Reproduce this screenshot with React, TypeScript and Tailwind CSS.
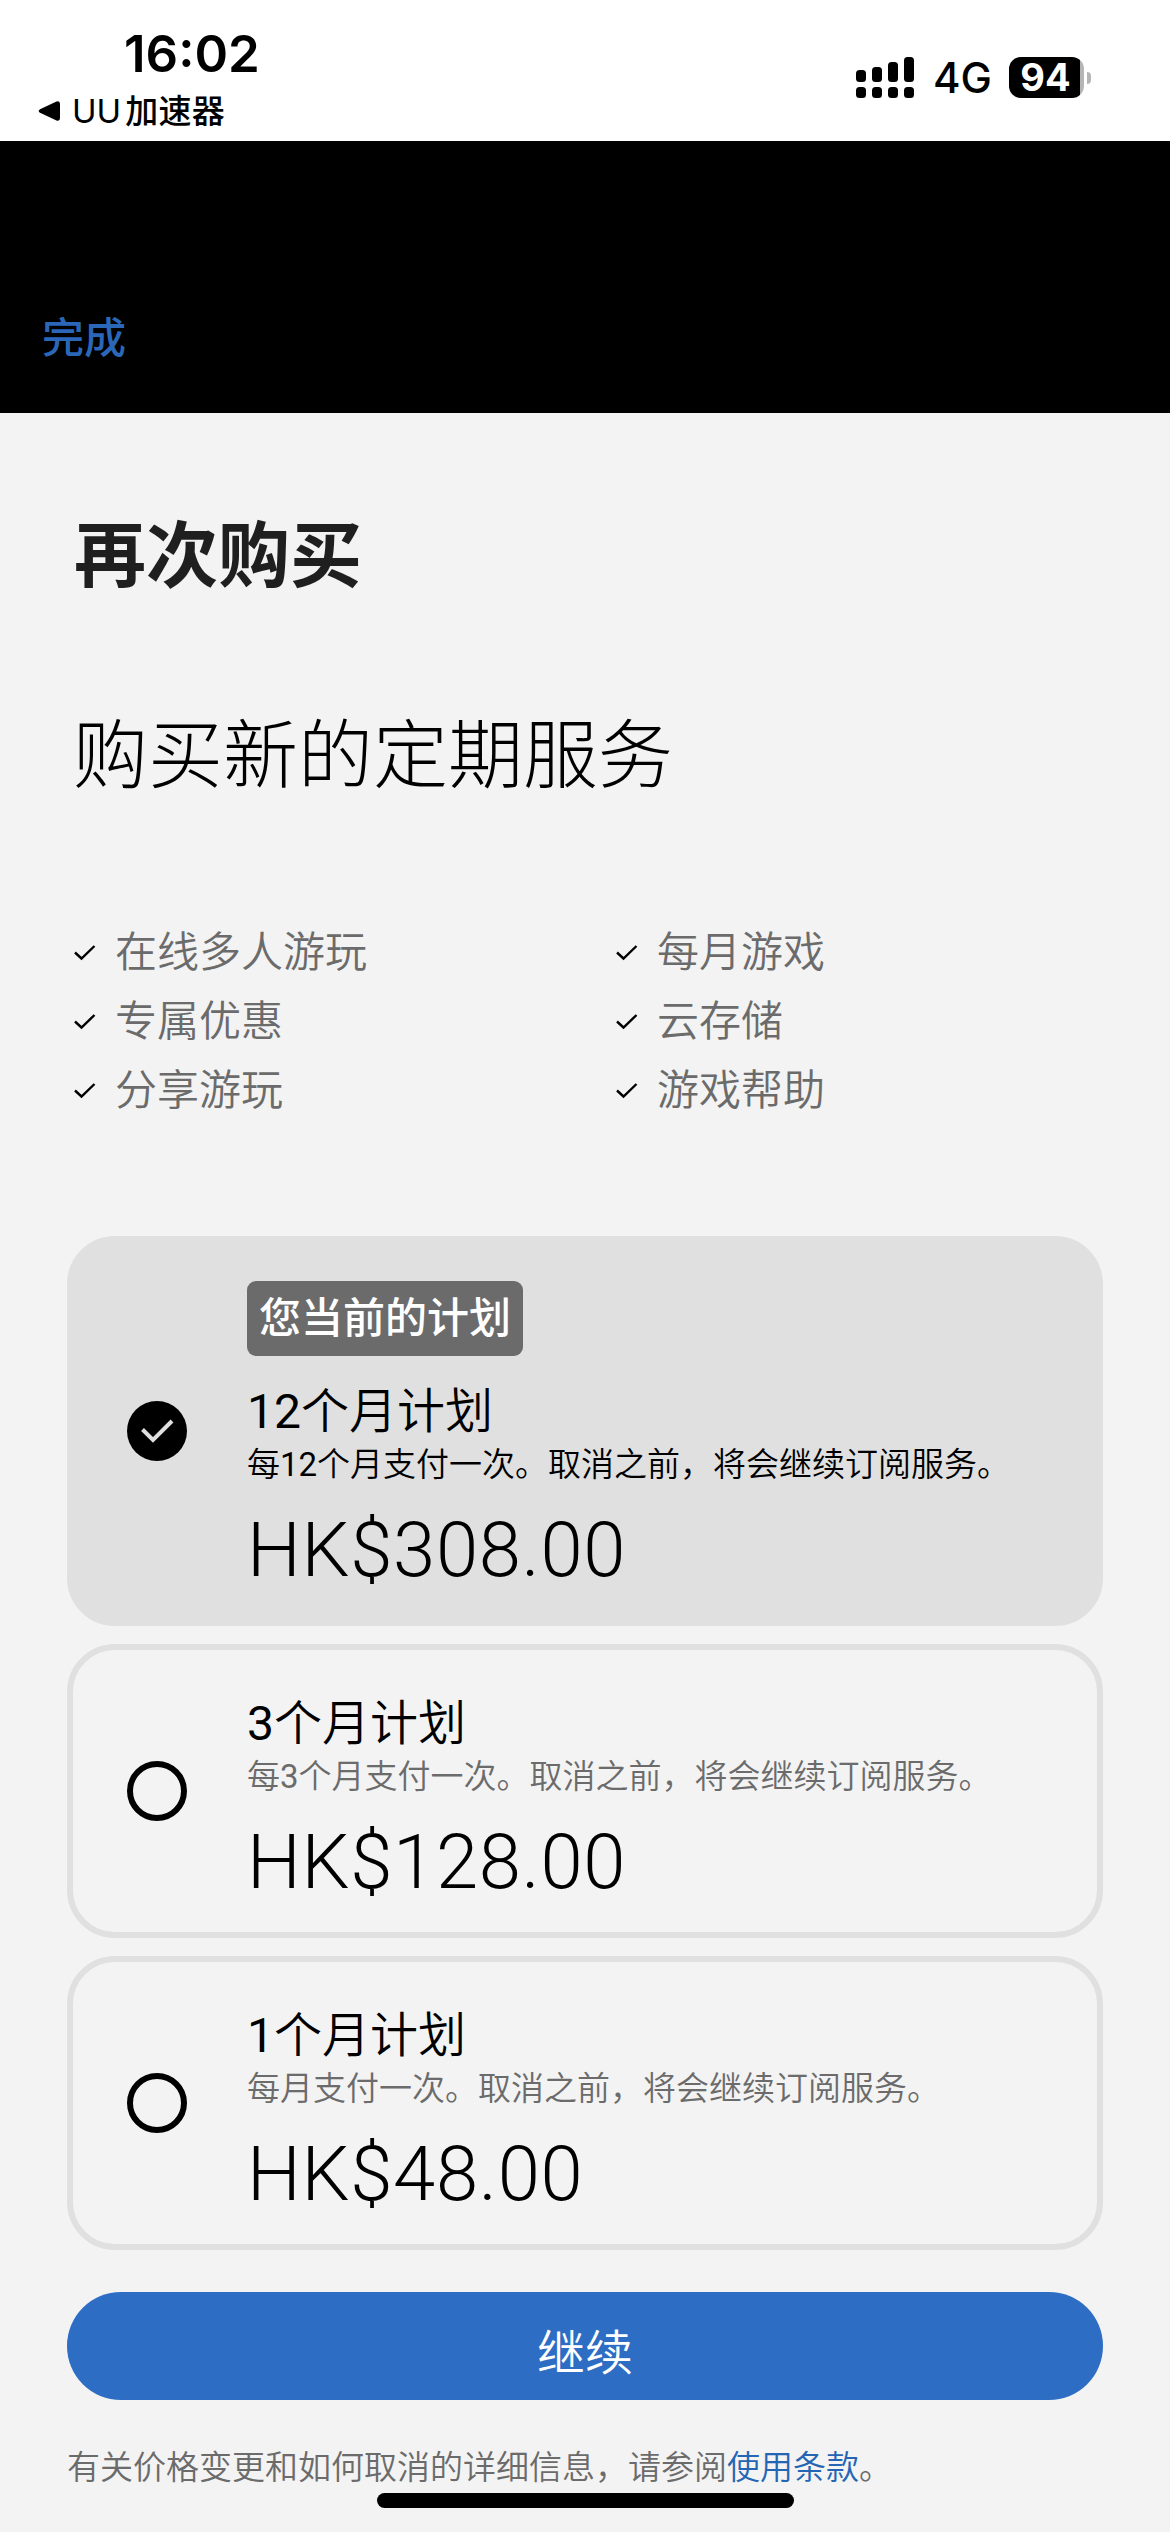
import { useState } from 'react';

interface Plan {
  id: string;
  title: string;
  description: string;
  price: string;
  current?: boolean;
}

const plans: Plan[] = [
  {
    id: '12m',
    title: '12个月计划',
    description: '每12个月支付一次。取消之前\uff0c将会继续订阅服务。',
    price: 'HK$308.00',
    current: true,
  },
  {
    id: '3m',
    title: '3个月计划',
    description: '每3个月支付一次。取消之前\uff0c将会继续订阅服务。',
    price: 'HK$128.00',
  },
  {
    id: '1m',
    title: '1个月计划',
    description: '每月支付一次。取消之前\uff0c将会继续订阅服务。',
    price: 'HK$48.00',
  },
];

const features = ['在线多人游玩', '每月游戏', '专属优惠', '云存储', '分享游玩', '游戏帮助'];

function SignalIcon() {
  const tops = [13, 10, 5, 0];
  return (
    <svg width="58" height="41" viewBox="0 0 58 41">
      {tops.map((top, i) => (
        <g key={top}>
          <rect x={i * 16} y={top} width="10" height={25 - top} rx="3.5" />
          <rect x={i * 16} y="30" width="10" height="11" rx="3.5" />
        </g>
      ))}
    </svg>
  );
}

function StatusBar() {
  return (
    <div className="flex h-[141px] justify-between bg-white text-black">
      <div className="flex flex-col pt-[23px] pl-[38px]">
        <div className="h-[62px] pl-[86px] font-['Inter',sans-serif] text-[51px] leading-[62px] font-semibold">
          16:02
        </div>
        <div className="mt-[2px] flex h-[48px] items-center">
          <svg width="22" height="20" viewBox="0 0 22 20">
            <path d="M2 8.2 18.5 0.6Q22 -0.6 22 3V17Q22 20.6 18.5 19.4L2 11.8Q-0.6 10 2 8.2Z" />
          </svg>
          <span className="ml-[12px] font-['Inter','Noto_Sans_CJK_SC',sans-serif] text-[33px] leading-[48px]">
            UU<span className="ml-1 font-medium tracking-[0.3px]">加速器</span>
          </span>
        </div>
      </div>
      <div className="mt-[57px] flex h-[41px] items-center pr-[79px]">
        <SignalIcon />
        <span className="ml-[19px] font-['Inter',sans-serif] text-[42px] leading-[41px] font-medium">4G</span>
        <div className="ml-[17px] flex items-center">
          <div className="flex h-[41px] w-[75px] items-center justify-center rounded-[12px] bg-linear-to-r from-black from-95% to-[#b5b5b5] to-95% pr-[2px] font-['Inter',sans-serif] text-[38px] leading-[41px] font-bold text-white">
            94
          </div>
          <div className="ml-[3px] h-[12px] w-[4px] rounded-r-full bg-[#b5b5b5]" />
        </div>
      </div>
    </div>
  );
}

function FeatureItem({ label }: { label: string }) {
  return (
    <li className="flex h-[69px] items-center">
      <svg className="mt-[8px]" width="22" height="18" viewBox="0 0 22 18" fill="none" stroke="black" strokeWidth="2.4">
        <path d="M1 8.5 7.5 14.5 20.5 2" />
      </svg>
      <span className="ml-[19px] text-[42px] leading-[69px] font-[350] text-[#6b6b6b]">{label}</span>
    </li>
  );
}

function Radio({ checked }: { checked: boolean }) {
  if (!checked) {
    return <span className="size-[60px] shrink-0 rounded-full border-6 border-black" />;
  }
  return (
    <span className="flex size-[60px] shrink-0 items-center justify-center rounded-full bg-black">
      <svg width="34" height="26" viewBox="0 0 34 26" fill="none" stroke="#e0e0e0" strokeWidth="4">
        <path d="M2.5 11.5 13 22 32 3" />
      </svg>
    </span>
  );
}

// Digits sit slightly heavier than the Chinese text around them
function MixedText({ text }: { text: string }) {
  return (
    <>
      {text.split(/(\d+)/).map((part, i) =>
        /^\d+$/.test(part) ? (
          <span key={i} className="font-normal">
            {part}
          </span>
        ) : (
          part
        )
      )}
    </>
  );
}

interface PlanCardProps {
  plan: Plan;
  selected: boolean;
  onSelect: () => void;
}

function PlanCard({ plan, selected, onSelect }: PlanCardProps) {
  return (
    <button
      type="button"
      onClick={onSelect}
      className={`flex w-full items-center rounded-[48px] border-6 border-[#e0e0e0] pl-[54px] text-left text-black ${
        selected ? 'bg-[#e0e0e0]' : ''
      }`}
    >
      <Radio checked={selected} />
      <div className={`ml-[60px] flex flex-col items-start pb-[28px] ${plan.current ? 'pt-[39px]' : 'pt-[44px]'}`}>
        {plan.current && (
          <span className="mb-[26px] h-[75px] rounded-[9px] bg-[#6b6b6b] px-[12px] text-[42px] leading-[68px] font-medium text-white">
            您当前的计划
          </span>
        )}
        <span className="font-['Roboto','Noto_Sans_CJK_SC',sans-serif] text-[48px] leading-[59px] font-[350]">
          <MixedText text={plan.title} />
        </span>
        <span
          className={`font-['Roboto','Noto_Sans_CJK_SC',sans-serif] text-[33px] leading-[48px] font-[350] ${
            selected ? 'text-black' : 'text-[#6b6b6b]'
          }`}
        >
          <MixedText text={plan.description} />
        </span>
        <span className="mt-[19px] font-['Roboto',sans-serif] text-[76px] leading-[84px] font-light tracking-[0.7px]">
          {plan.price}
        </span>
      </div>
    </button>
  );
}

export default function App() {
  const [selectedId, setSelectedId] = useState('12m');

  return (
    <div
      lang="zh-CN"
      className="flex h-[2532px] w-[1170px] flex-col overflow-hidden bg-[#f3f3f3] font-['Noto_Sans_CJK_SC',sans-serif]"
    >
      <StatusBar />

      {/* Navigation bar */}
      <div className="flex h-[272px] items-end bg-black px-[42px] pb-[48px]">
        <button type="button" className="text-[42px] leading-[60px] font-medium text-[#2b67b9]">
          完成
        </button>
      </div>

      <main className="flex flex-col px-[67px]">
        <h1 className="mt-[101px] pl-[7px] text-[72px] leading-[72px] font-bold text-[#1f1f1f]">再次购买</h1>
        <h2 className="mt-[126px] pl-[6px] text-[75px] leading-[76px] font-light text-black">购买新的定期服务</h2>

        <ul className="mt-[126px] grid grid-cols-[542px_1fr] pl-[7px]">
          {features.map((label) => (
            <FeatureItem key={label} label={label} />
          ))}
        </ul>

        {/* Plans */}
        <div className="mt-[115px] flex flex-col gap-[18px]">
          {plans.map((plan) => (
            <PlanCard
              key={plan.id}
              plan={plan}
              selected={plan.id === selectedId}
              onSelect={() => setSelectedId(plan.id)}
            />
          ))}
        </div>

        <button
          type="button"
          className="mt-[42px] h-[108px] rounded-full bg-[#2d6dc4] pt-[7px] text-[48px] leading-[101px] font-[350] text-white"
        >
          继续
        </button>

        <p className="mt-[41px] text-[33px] leading-[48px] font-[350] text-[#6b6b6b]">
          有关价格变更和如何取消的详细信息{'\uff0c'}请参阅<a className="text-[#2566b4]">使用条款</a>。
        </p>
      </main>

      {/* Home indicator */}
      <div className="mt-[4px] h-[15px] w-[417px] shrink-0 self-center rounded-full bg-black" />
    </div>
  );
}
